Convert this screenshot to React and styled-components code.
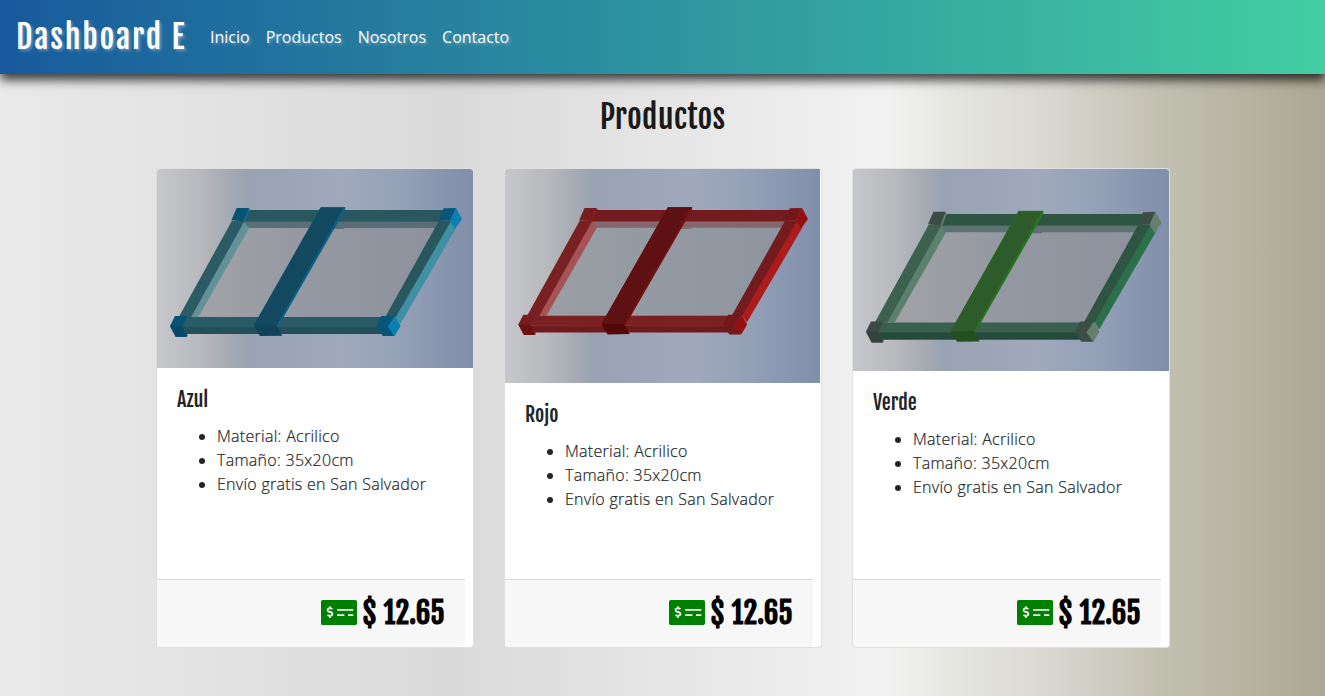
import React from 'react';
import styled, { createGlobalStyle } from 'styled-components';
import { FaMoneyCheckAlt } from 'react-icons/fa';

const GlobalStyle = createGlobalStyle`
  *, *::before, *::after { box-sizing: border-box; }
  body {
    margin: 0;
    font-family: "Open Sans", sans-serif;
    font-size: 16px;
    line-height: 1.5;
    color: #212529;
    overflow: hidden;
  }
`;

const display = '"Fjalla One", "Roboto Condensed", "Liberation Sans Narrow", sans-serif';

const Page = styled.div`
  height: 696px;
  background: linear-gradient(
    90deg,
    #eaeaea 0%,
    #dadada 34%,
    #f2f2f2 67%,
    #e8e8e4 71%,
    #d7d6ce 80%,
    #cfccc2 83%,
    #c1bfb0 88%,
    #aba893 100%
  );
`;

const Navbar = styled.nav`
  height: 74px;
  padding: 0 16px;
  display: flex;
  align-items: center;
  background: linear-gradient(to right, #185a9d, #43cea2);
  box-shadow: 0 6px 10px rgba(0, 0, 0, 0.75);
  color: #fff;
  text-shadow: 2px 2px 3px rgba(255, 255, 255, 0.3);
`;

const Brand = styled.a`
  width: 186px;
  font-family: ${display};
  font-size: 32px;
  line-height: 48px;
  letter-spacing: 1.75px;
  white-space: nowrap;
`;

const NavLinks = styled.div`
  display: flex;
  gap: 16px;
  margin-left: 8px;
`;

const NavLink = styled.a`
  color: #fff;
`;

const Title = styled.h1`
  margin: 0;
  height: 94px;
  padding-top: 21px;
  text-align: center;
  font-family: ${display};
  font-size: 32px;
  font-weight: 400;
  line-height: 44px;
  letter-spacing: 0.2px;
  color: #1a1a1a;
`;

const Cards = styled.main`
  display: flex;
  gap: 30px;
  padding-left: 156px;
`;

const Card = styled.article`
  width: 318px;
  height: 480px;
  display: flex;
  flex-direction: column;
  background: #fff;
  border: 1px solid rgba(0, 0, 0, 0.125);
  border-radius: 4px;
  overflow: hidden;
`;

const Picture = styled.svg`
  display: block;
  flex: none;
  width: ${(p) => p.$w}px;
  height: ${(p) => p.$h}px;
`;

const CardBody = styled.div`
  flex: 1;
  padding: 20px;
`;

const CardTitle = styled.h5`
  margin: 0 0 12px;
  font-family: ${display};
  font-size: 20px;
  font-weight: 500;
  line-height: 24px;
`;

const Features = styled.ul`
  margin: 0;
  padding-left: 40px;
  font-weight: 300;
  letter-spacing: 0.28px;
  -webkit-text-stroke: 0.2px currentColor;
`;

const CardFooter = styled.footer`
  width: 308px;
  height: 68px;
  padding: 0 20px 2px;
  display: flex;
  align-items: center;
  justify-content: flex-end;
  gap: 6px;
  background: #f7f7f7;
  border-top: 1px solid #d8d8d8;
  border-radius: 0 0 4px 4px;
  color: #000;
`;

const CheckIcon = styled(FaMoneyCheckAlt)`
  width: 36px;
  height: 29px;
  color: #008000;
`;

const Price = styled.span`
  font-family: ${display};
  font-size: 28.8px;
  font-weight: 700;
  line-height: 40px;
  letter-spacing: 0.36px;
`;

function FramePicture({ id, w: width = 316, h, vb, move, c }) {
  const [x, y, w, vh] = vb.split(' ').map(Number);
  return (
    <Picture $w={width} $h={h} viewBox={vb} preserveAspectRatio="none">
      <defs>
        <linearGradient id={id + 'b'}>
          <stop offset="0" stopColor="#c6c7cb" />
          <stop offset="0.13" stopColor="#b9babe" />
          <stop offset="0.22" stopColor="#a7abb3" />
          <stop offset="0.28" stopColor="#9aa3b2" />
          <stop offset="0.42" stopColor="#9ba5b7" />
          <stop offset="0.58" stopColor="#a0a9bc" />
          <stop offset="0.75" stopColor="#96a2b8" />
          <stop offset="1" stopColor="#808eaa" />
        </linearGradient>
        <linearGradient id={id + 'g'}>
          <stop offset="0" stopColor={c.glass0} />
          <stop offset="0.45" stopColor={c.glass} />
          <stop offset="1" stopColor={c.glass1} />
        </linearGradient>
      </defs>
      <rect x={x} y={y} width={w} height={vh} fill={`url(#${id}b)`} />
      <g transform={move}>
        <polygon points="290,200 862,200 705,474 132,474" fill={`url(#${id}g)`} />
        <polygon points="280,184 872,184 860,204 292,204" fill={c.lip} />
        <polygon points="552,203 582,203 582,207 550,207" fill={c.lip} />
        <polygon points="295,150 882,150 870,185 280,185" fill={c.bar} />
        <polygon points="280,182 297,205 145,471 118,471" fill={c.inner} />
        <polygon points="246,182 284,182 123,472 86,472" fill={c.side} />
        <polygon points="100,471 692,471 700,502 94,502" fill={c.barFront} />
        <polygon points="94,501 695,501 700,522 106,522" fill={c.under} />
        <polygon points="902,180 918,205 751,492 736,468" fill={c.outer} />
        <polygon points="868,180 904,182 738,470 704,474" fill={c.bar} />
        <polygon points="512,141 586,141 585,150 398,476 382,500 311,497" fill={c.edge} />
        <polygon points="512,144 580,144 379,498 311,497" fill={c.band} />
        <polygon points="311,497 380,497 397,527 330,528" fill={c.cap} />
        <polygon points="260,144 297,144 282,184 244,181" fill={c.cornerTL} />
        <polygon points="297,144 300,150 286,184 280,184" fill={c.cornerEdge} />
        <polygon points="881,145 918,144 901,182 866,180" fill={c.corner} />
        <polygon points="918,144 936,177 915,207 900,182" fill={c.face} />
        <polygon points="75,468 113,468 97,500 113,526 110,530 77,530 60,498" fill={c.cornerTL} />
        <polygon points="60,498 95,498 110,530 77,530" fill={c.cornerFront} />
        <polygon points="694,468 736,468 715,500 734,528 698,528 680,498" fill={c.corner} />
        <polygon points="736,468 752,498 734,528 713,500" fill={c.face} />
      </g>
    </Picture>
  );
}

const products = [
  {
    id: 'azul', name: 'Azul', h: 199, vb: '21 27 948 597', move: undefined,
    c: { glass0: '#a3a3a6', glass: '#9498a2', glass1: '#8e929e', lip: '#596e77', bar: '#28575f', inner: '#609297', side: '#2c5b65', barFront: '#285b65', under: '#234f5a', outer: '#3f90a2', edge: '#0c6285', band: '#124960', cap: '#0e435b', cornerTL: '#065275', cornerEdge: '#0a6f93', cornerFront: '#064967', corner: '#09557a', face: '#0980b2' },
  },
  {
    id: 'rojo', name: 'Rojo', w: 315, h: 214, vb: '15 27 945 642', move: 'translate(-4.5 2) scale(.992 .987)',
    c: { glass0: '#9b9fa3', glass: '#939aa3', glass1: '#8f959e', lip: '#85666d', bar: '#731b1f', inner: '#a55356', side: '#792022', barFront: '#7a2022', under: '#6f1a1d', outer: '#ae1b1d', edge: '#751012', band: '#5d1113', cap: '#520809', cornerTL: '#771e20', cornerEdge: '#8c1717', cornerFront: '#691214', corner: '#741719', face: '#960f10' },
  },
  {
    id: 'verde', name: 'Verde', h: 202, vb: '21 27 948 606', move: 'translate(-1 9.5) scale(1.0126 1.0145)',
    c: { glass0: '#a3a3a6', glass: '#9498a2', glass1: '#8e929e', lip: '#5d7170', bar: '#2e5542', inner: '#5b806e', side: '#3d614f', barFront: '#39604e', under: '#254b3a', outer: '#2c704b', edge: '#24751f', band: '#2e5b2a', cap: '#244f20', cornerTL: '#3c4b45', cornerEdge: '#668070', cornerFront: '#34433d', corner: '#3c4d46', face: '#657e6d' },
  },
];

export default function App() {
  return (
    <Page>
      <GlobalStyle />
      <Navbar>
        <Brand>Dashboard E</Brand>
        <NavLinks>
          <NavLink>Inicio</NavLink>
          <NavLink>Productos</NavLink>
          <NavLink>Nosotros</NavLink>
          <NavLink>Contacto</NavLink>
        </NavLinks>
      </Navbar>
      <Title>Productos</Title>
      <Cards>
        {products.map((p) => (
          <Card key={p.id}>
            <FramePicture id={p.id} w={p.w} h={p.h} vb={p.vb} move={p.move} c={p.c} />
            <CardBody>
              <CardTitle>{p.name}</CardTitle>
              <Features>
                <li>Material: Acrilico</li>
                <li>Tamaño: 35x20cm</li>
                <li>Envío gratis en San Salvador</li>
              </Features>
            </CardBody>
            <CardFooter>
              <CheckIcon />
              <Price>$ 12.65</Price>
            </CardFooter>
          </Card>
        ))}
      </Cards>
    </Page>
  );
}
